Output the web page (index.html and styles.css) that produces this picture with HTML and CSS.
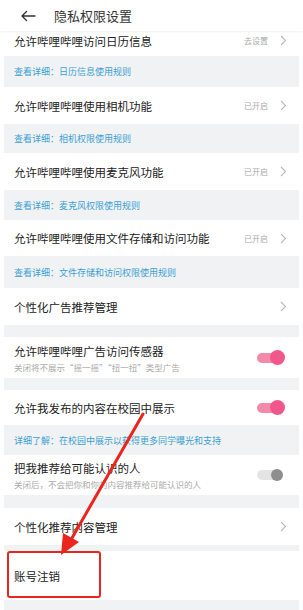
FILE: index.html
```html
<!DOCTYPE html>
<html lang="zh-CN">
  <head>
    <meta charset="UTF-8" />
    <meta name="viewport" content="width=device-width, initial-scale=1.0" />
    <title>隐私权限设置</title>
    <link rel="stylesheet" href="styles.css">
  </head>
  <body>
    <div class="page">
      <div class="topbar">
        <svg class="back" width="16" height="12" viewBox="0 0 16 12">
          <path d="M15 6H2M6.5 1.5L2 6l4.5 4.5" fill="none" stroke="#333" stroke-width="1.4" stroke-linecap="round" stroke-linejoin="round"/>
        </svg>
        <span class="title">隐私权限设置</span>
      </div>

      <div class="list">
        <div class="row row-cut">
          <span class="label">允许哔哩哔哩访问日历信息</span>
          <span class="state">去设置</span>
          <svg class="chev" width="7" height="11" viewBox="0 0 7 11"><path d="M1 1l4.5 4.5L1 10" fill="none" stroke="#bbb" stroke-width="1.1"/></svg>
        </div>
        <div class="note note-first">查看详细：日历信息使用规则</div>

        <div class="row">
          <span class="label">允许哔哩哔哩使用相机功能</span>
          <span class="state">已开启</span>
          <svg class="chev" width="7" height="11" viewBox="0 0 7 11"><path d="M1 1l4.5 4.5L1 10" fill="none" stroke="#bbb" stroke-width="1.1"/></svg>
        </div>
        <div class="note note-short">查看详细：相机权限使用规则</div>

        <div class="row">
          <span class="label">允许哔哩哔哩使用麦克风功能</span>
          <span class="state">已开启</span>
          <svg class="chev" width="7" height="11" viewBox="0 0 7 11"><path d="M1 1l4.5 4.5L1 10" fill="none" stroke="#bbb" stroke-width="1.1"/></svg>
        </div>
        <div class="note">查看详细：麦克风权限使用规则</div>

        <div class="row row-file">
          <span class="label">允许哔哩哔哩使用文件存储和访问功能</span>
          <span class="state">已开启</span>
          <svg class="chev" width="7" height="11" viewBox="0 0 7 11"><path d="M1 1l4.5 4.5L1 10" fill="none" stroke="#bbb" stroke-width="1.1"/></svg>
        </div>
        <div class="note note-tall">查看详细：文件存储和访问权限使用规则</div>

        <div class="row">
          <span class="label">个性化广告推荐管理</span>
          <svg class="chev" width="7" height="11" viewBox="0 0 7 11"><path d="M1 1l4.5 4.5L1 10" fill="none" stroke="#bbb" stroke-width="1.1"/></svg>
        </div>

        <div class="gap"></div>

        <div class="row row-sub">
          <div class="texts">
            <span class="label">允许哔哩哔哩广告访问传感器</span>
            <span class="sub">关闭将不展示“摇一摇”“扭一扭”类型广告</span>
          </div>
          <span class="switch on"></span>
        </div>

        <div class="gap"></div>

        <div class="row row-campus">
          <span class="label">允许我发布的内容在校园中展示</span>
          <span class="switch on"></span>
        </div>
        <div class="note">详细了解：在校园中展示以获得更多同学曝光和支持</div>

        <div class="row row-sub row-people">
          <div class="texts">
            <span class="label">把我推荐给可能认识的人</span>
            <span class="sub">关闭后，不会把你和你的内容推荐给可能认识的人</span>
          </div>
          <span class="switch off"></span>
        </div>

        <div class="gap gap-wide"></div>

        <div class="row">
          <span class="label">个性化推荐内容管理</span>
          <svg class="chev" width="7" height="11" viewBox="0 0 7 11"><path d="M1 1l4.5 4.5L1 10" fill="none" stroke="#bbb" stroke-width="1.1"/></svg>
        </div>

        <div class="gap gap-small"></div>

        <div class="row row-last">
          <span class="label">账号注销</span>
        </div>
        <div class="gap gap-bottom"></div>
      </div>

      <!-- 标注：红框和箭头 -->
      <div class="mark-box"></div>
      <svg class="mark-arrow" width="303" height="610" viewBox="0 0 303 610">
        <line x1="143" y1="414" x2="72" y2="538" stroke="#e8261d" stroke-width="3" stroke-linecap="round"/>
        <polygon points="61,555 63,533 79,542" fill="#e8261d"/>
      </svg>
    </div>
  </body>
</html>
```

FILE: styles.css
```css
body {
  margin: 0;
  padding: 0;
  background-color: #fff;
  font-family: "Noto Sans CJK SC", "Noto Sans", sans-serif;
  color: #222;
}

.page {
  position: relative;
  width: 303px;
  height: 610px;
  overflow: hidden;
}

.topbar {
  height: 31px;
  display: flex;
  align-items: center;
  padding-left: 20px;
  background-color: #fff;
  box-shadow: 0 1px 2px rgba(0, 0, 0, 0.06);
  position: relative;
  z-index: 1;
}

.back {
  margin-right: 18px;
}

.title {
  font-size: 13px;
  color: #333;
}

.list {
  margin: -6px 4px 0 4px;
}

.row {
  display: flex;
  align-items: center;
  height: 37px;
  padding: 0 10px;
  background-color: #fff;
}

.row-cut {
  height: 31px;
}

.row-file {
  height: 36px;
}

.row-sub {
  height: 41px;
}

.row-campus {
  height: 35px;
}

.row-people {
  height: 40px;
}

.row-last {
  height: 49px;
}

.label {
  flex: 1;
  font-size: 11.5px;
  color: #222;
  white-space: nowrap;
}

.texts {
  flex: 1;
  display: flex;
  flex-direction: column;
}

.sub {
  font-size: 8.5px;
  color: #aaa;
  margin-top: 2px;
  white-space: nowrap;
}

.state {
  font-size: 8px;
  color: #aaa;
  margin-right: 12px;
}

.chev {
  margin-right: 2px;
}

.note {
  height: 30px;
  display: flex;
  align-items: center;
  padding: 0 10px;
  background-color: #f1f2f4;
  font-size: 9px;
  color: #3a9fd3;
  white-space: nowrap;
}

.note-first {
  height: 31px;
}

.note-short {
  height: 29px;
}

.note-tall {
  height: 32px;
}

.gap {
  height: 12px;
  background-color: #f1f2f4;
}

.gap-wide {
  height: 13px;
}

.gap-small {
  height: 6px;
}

.gap-bottom {
  height: 10px;
}

.switch {
  position: relative;
  width: 26px;
  height: 10px;
  border-radius: 5px;
  margin-right: 6px;
}

.switch::after {
  content: "";
  position: absolute;
  top: 50%;
  border-radius: 50%;
}

.switch.on {
  background-color: #f38aaa;
}

.switch.on::after {
  right: -2px;
  width: 15px;
  height: 15px;
  margin-top: -7.5px;
  background-color: #f0588b;
}

.switch.off {
  background-color: #e4e4e4;
}

.switch.off::after {
  right: 0;
  width: 12px;
  height: 12px;
  margin-top: -6px;
  background-color: #8e8e8e;
}

.mark-box {
  position: absolute;
  left: 7px;
  top: 551px;
  width: 90px;
  height: 43px;
  border: 2px solid #e8261d;
  border-radius: 3px;
}

.mark-arrow {
  position: absolute;
  left: 0;
  top: 0;
}
```
